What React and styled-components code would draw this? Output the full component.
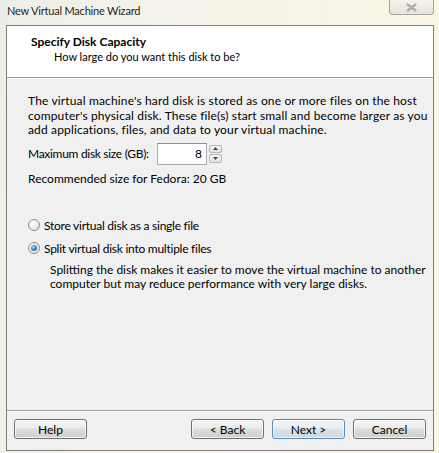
import React from "react";
import styled, { createGlobalStyle } from "styled-components";

const Global = createGlobalStyle`
  html, body { margin: 0; padding: 0; background: #f2efe2; }
  body { font-family: Lato, "Liberation Sans", sans-serif; }
`;

const Win = styled.div`
  width: 439px;
  height: 453px;
  box-sizing: border-box;
  display: flex;
  flex-direction: column;
  padding: 0 5px 2px 6px;
  background: linear-gradient(100deg, #eeeee8 0%, #f6f4ea 40%, #f9f6e4 100%);
`;

const TitleBar = styled.div`
  height: 25px;
  display: flex;
  align-items: flex-start;
  justify-content: space-between;
`;

const Title = styled.div`
  font-size: 11px;
  letter-spacing: -0.2px;
  color: #1e1e1e;
  padding: 4px 0 0 1px;
  white-space: nowrap;
`;

const Close = styled.div`
  width: 45px;
  height: 15px;
  box-sizing: border-box;
  border: 1px solid #a8a49a;
  border-top: none;
  border-radius: 0 0 4px 4px;
  background: linear-gradient(#f5f3ec, #e6e3d8);
  display: flex;
  align-items: center;
  justify-content: center;
`;

const Client = styled.div`
  flex: 1;
  display: flex;
  flex-direction: column;
  border: 1px solid #7f7f7f;
  background: #f0f0f0;
`;

const Header = styled.div`
  height: 52px;
  background: #fff;
  border-bottom: 1px solid #a0a0a0;
  box-shadow: 0 1px 0 #fff;
  padding: 8px 0 0 24px;
  box-sizing: border-box;
  white-space: nowrap;
`;

const HTitle = styled.div`
  font-weight: 700;
  font-size: 12px;
  color: #000;
  line-height: 15px;
`;

const HSub = styled.div`
  font-size: 11px;
  color: #000;
  line-height: 15px;
  padding-left: 23px;
`;

const Body = styled.div`
  flex: 1;
  padding: 16px 0 0 21px;
  font-size: 12px;
  color: #000;
  white-space: nowrap;
`;

const Para = styled.p`
  margin: 0;
  line-height: 14.5px;
  letter-spacing: 0.15px;
`;

const SizeRow = styled.div`
  display: flex;
  align-items: center;
  margin-top: 5px;
  height: 22px;
`;

const Label = styled.span`
  width: 129px;
  letter-spacing: -0.3px;
`;

const Input = styled.div`
  width: 50px;
  height: 22px;
  box-sizing: border-box;
  border: 1px solid #abadb3;
  border-top-color: #8e8f8f;
  background: #fff;
  text-align: right;
  padding: 2px 4px 0 0;
  line-height: 16px;
`;

const Spin = styled.div`
  margin-left: 2px;
  width: 13px;
  height: 18px;
  display: flex;
  flex-direction: column;
  gap: 1px;
`;

const SpinBtn = styled.div`
  flex: 1;
  border: 1px solid #b5b5b5;
  border-radius: 2px;
  background: linear-gradient(#f6f6f6, #e0e0e0);
  display: flex;
  align-items: center;
  justify-content: center;
`;

const Rec = styled.div`
  margin-top: 6px;
  line-height: 15px;
`;

const RadioRow = styled.div`
  display: flex;
  align-items: center;
  gap: 4px;
  margin-top: ${(p) => p.$mt}px;
  height: 15px;
  letter-spacing: -0.25px;
`;

const Radio = styled.span`
  width: 12px;
  height: 12px;
  border-radius: 50%;
  box-sizing: border-box;
  border: 1px solid #8e8f8f;
  background: radial-gradient(circle at 40% 40%, #ffffff 0%, #e4e4e4 70%, #cfcfcf 100%);
  display: flex;
  align-items: center;
  justify-content: center;
  &::after {
    content: "";
    display: ${(p) => (p.$on ? "block" : "none")};
    width: 6px;
    height: 6px;
    border-radius: 50%;
    background: radial-gradient(circle at 40% 35%, #9ed7f7 0%, #2b7fc3 55%, #114e88 100%);
  }
`;

const Desc = styled.p`
  margin: 7px 0 0 22px;
  line-height: 14.5px;
`;

const Footer = styled.div`
  height: 40px;
  border-top: 1px solid #a0a0a0;
  box-shadow: inset 0 1px 0 #fff;
  display: flex;
  align-items: flex-start;
  padding: 8px 0 0 7px;
  box-sizing: border-box;
`;

const Btn = styled.div`
  width: 73px;
  height: 20px;
  box-sizing: border-box;
  border: 1px solid ${(p) => (p.$def ? "#5a8db5" : "#707070")};
  border-radius: 3px;
  background: ${(p) =>
    p.$def
      ? "linear-gradient(#f2f6f9 0%, #e9eef2 45%, #dbe3ea 50%, #cfd8e0 100%)"
      : "linear-gradient(#f4f4f4 0%, #ebebeb 45%, #dddddd 50%, #cfcfcf 100%)"};
  box-shadow: inset 0 0 0 1px rgba(255, 255, 255, 0.7);
  font-size: 12px;
  color: #000;
  display: flex;
  align-items: center;
  justify-content: center;
  margin-left: ${(p) => p.$ml || 0}px;
`;

export default function App() {
  return (
    <>
      <Global />
      <Win>
        <TitleBar>
          <Title>New Virtual Machine Wizard</Title>
          <Close>
            <svg width="11" height="9" viewBox="0 0 11 9">
              <path d="M1 1 L10 8 M10 1 L1 8" stroke="#7d7b74" strokeWidth="2.2" fill="none" />
              <path d="M1 1 L10 8 M10 1 L1 8" stroke="#f4f2ea" strokeWidth="0.8" fill="none" />
            </svg>
          </Close>
        </TitleBar>
        <Client>
          <Header>
            <HTitle>Specify Disk Capacity</HTitle>
            <HSub>How large do you want this disk to be?</HSub>
          </Header>
          <Body>
            <Para>
              The virtual machine's hard disk is stored as one or more files on the host
              <br />
              computer's physical disk. These file(s) start small and become larger as you
              <br />
              add applications, files, and data to your virtual machine.
            </Para>
            <SizeRow>
              <Label>Maximum disk size (GB):</Label>
              <Input>8</Input>
              <Spin>
                <SpinBtn>
                  <svg width="5" height="3" viewBox="0 0 5 3">
                    <path d="M0 3 L2.5 0 L5 3Z" fill="#444" />
                  </svg>
                </SpinBtn>
                <SpinBtn>
                  <svg width="5" height="3" viewBox="0 0 5 3">
                    <path d="M0 0 L2.5 3 L5 0Z" fill="#444" />
                  </svg>
                </SpinBtn>
              </Spin>
            </SizeRow>
            <Rec>Recommended size for Fedora: 20 GB</Rec>
            <RadioRow $mt={32}>
              <Radio />
              <span>Store virtual disk as a single file</span>
            </RadioRow>
            <RadioRow $mt={8}>
              <Radio $on />
              <span>Split virtual disk into multiple files</span>
            </RadioRow>
            <Desc>
              Splitting the disk makes it easier to move the virtual machine to another
              <br />
              computer but may reduce performance with very large disks.
            </Desc>
          </Body>
          <Footer>
            <Btn>Help</Btn>
            <Btn $ml={104}>&lt; Back</Btn>
            <Btn $ml={8} $def>
              Next &gt;
            </Btn>
            <Btn $ml={8}>Cancel</Btn>
          </Footer>
        </Client>
      </Win>
    </>
  );
}
